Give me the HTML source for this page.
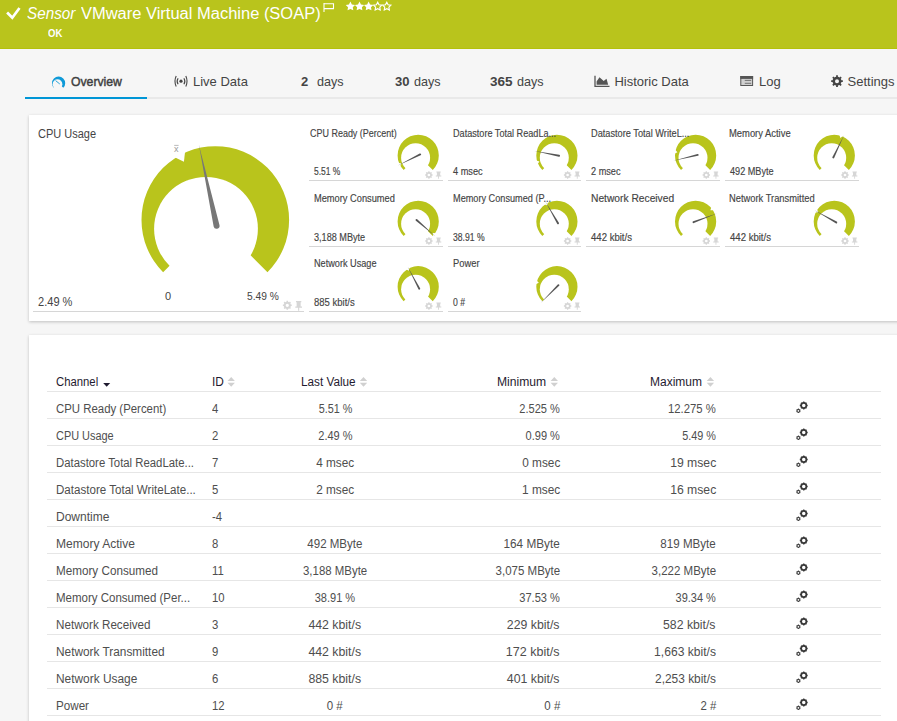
<!DOCTYPE html><html><head><meta charset="utf-8"><style>
html,body{margin:0;padding:0;}
body{width:897px;height:721px;overflow:hidden;position:relative;background:#f6f6f6;font-family:"Liberation Sans",sans-serif;}
.t{position:absolute;white-space:nowrap;}
.abs{position:absolute;}
.s{position:absolute;left:0;top:0;overflow:visible;}
</style></head><body>
<div class="abs" style="left:0;top:0;width:897px;height:48px;background:#b9c41c;border-bottom:1px solid #b4c10a;"></div>
<div class="t" style="left:27.20px;top:5.96px;font-size:16px;line-height:16px;color:#fff;font-weight:normal;font-style:italic;letter-spacing:0px;"><span style="display:inline-block;transform:scaleX(0.953);transform-origin:left 0">Sensor</span></div>
<div class="t" style="left:81.20px;top:5.96px;font-size:16px;line-height:16px;color:#fff;font-weight:normal;font-style:normal;letter-spacing:0px;"><span style="display:inline-block;transform:scaleX(1.03);transform-origin:left 0">VMware Virtual Machine (SOAP)</span></div>
<div class="t" style="left:47.90px;top:27.83px;font-size:10.6px;line-height:10.6px;color:#fff;font-weight:bold;font-style:normal;letter-spacing:0px;"><span style="display:inline-block;transform:scaleX(0.9);transform-origin:left 0">OK</span></div>
<svg class="s" width="897" height="721"><path d="M7.1 12.5 L12.3 17.7 L19.5 8.0" stroke="#fff" stroke-width="2.7" fill="none"/><path d="M324 3 V12 M324 3.8 H333.5 V8.6 H324" stroke="#fff" stroke-width="1.1" fill="none"/><polygon points="350.40,1.50 351.87,4.38 355.06,4.89 352.78,7.17 353.28,10.36 350.40,8.90 347.52,10.36 348.02,7.17 345.74,4.89 348.93,4.38" fill="#fff"/><polygon points="359.50,1.50 360.97,4.38 364.16,4.89 361.88,7.17 362.38,10.36 359.50,8.90 356.62,10.36 357.12,7.17 354.84,4.89 358.03,4.38" fill="#fff"/><polygon points="368.60,1.50 370.07,4.38 373.26,4.89 370.98,7.17 371.48,10.36 368.60,8.90 365.72,10.36 366.22,7.17 363.94,4.89 367.13,4.38" fill="#fff"/><polygon points="377.70,2.20 378.99,4.72 381.79,5.17 379.79,7.18 380.23,9.98 377.70,8.70 375.17,9.98 375.61,7.18 373.61,5.17 376.41,4.72" fill="none" stroke="#fff" stroke-width="1.15"/><polygon points="386.80,2.20 388.09,4.72 390.89,5.17 388.89,7.18 389.33,9.98 386.80,8.70 384.27,9.98 384.71,7.18 382.71,5.17 385.51,4.72" fill="none" stroke="#fff" stroke-width="1.15"/></svg>
<div class="abs" style="left:147px;top:97px;width:750px;height:2px;background:#e9e9e9;"></div>
<div class="abs" style="left:25px;top:97px;width:122px;height:2px;background:#0096d6;"></div>
<svg class="s" width="897" height="721"><path fill-rule="evenodd" d="M58.60,83.20 L53.93,87.87 A6.6,6.6 0 1 1 63.27,87.87 Z" fill="#0f9ad8"/><circle cx="57.50" cy="84.20" r="4.88" fill="#f6f6f6"/><path d="M55.6 80.6 L59.8 84.0" stroke="#0f9ad8" stroke-width="0.9"/><circle cx="181" cy="81.2" r="1.6" fill="#444"/><path d="M178.1 78.2 Q176.1 81.2 178.1 84.2 M183.9 78.2 Q185.9 81.2 183.9 84.2" stroke="#444" stroke-width="1.1" fill="none"/><path d="M176.2 76 Q173.7 81.2 176.2 86.4 M185.8 76 Q188.3 81.2 185.8 86.4" stroke="#444" stroke-width="1.1" fill="none"/><path d="M595 75.8 V86.3 H609.5" stroke="#555" stroke-width="1.3" fill="none"/><path d="M596.6 84.8 L596.6 81.5 L599.5 77.2 L603.7 81 L606.5 78.8 L608.2 84.8 Z" fill="#555"/><rect x="740.8" y="76.5" width="11.8" height="9" fill="#d0d0d0" stroke="#555" stroke-width="1"/><rect x="740.3" y="76" width="12.8" height="2.9" fill="#555"/><path d="M744.8 80.4 H751.2 M744.8 83.3 H751.2" stroke="#666" stroke-width="0.9"/><path fill-rule="evenodd" d="M835.28,77.06 L836.13,76.80 L836.08,75.37 L837.92,75.37 L837.87,76.80 L838.72,77.06 L838.72,77.06 L839.49,77.47 L840.47,76.43 L841.77,77.73 L840.73,78.71 L841.14,79.48 L841.14,79.48 L841.40,80.33 L842.83,80.28 L842.83,82.12 L841.40,82.07 L841.14,82.92 L841.14,82.92 L840.73,83.69 L841.77,84.67 L840.47,85.97 L839.49,84.93 L838.72,85.34 L838.72,85.34 L837.87,85.60 L837.92,87.03 L836.08,87.03 L836.13,85.60 L835.28,85.34 L835.28,85.34 L834.51,84.93 L833.53,85.97 L832.23,84.67 L833.27,83.69 L832.86,82.92 L832.86,82.92 L832.60,82.07 L831.17,82.12 L831.17,80.28 L832.60,80.33 L832.86,79.48 L832.86,79.48 L833.27,78.71 L832.23,77.73 L833.53,76.43 L834.51,77.47 L835.28,77.06 Z M839.00,81.20 A2.0,2.0 0 1 0 835.00,81.20 A2.0,2.0 0 1 0 839.00,81.20 Z" fill="#444"/></svg>
<div class="t" style="left:70.80px;top:74.80px;font-size:13px;line-height:13px;color:#404040;font-weight:normal;font-style:normal;letter-spacing:0px;-webkit-text-stroke:0.45px #404040;"><span style="display:inline-block;transform:scaleX(0.94);transform-origin:left 0">Overview</span></div>
<div class="t" style="left:193.00px;top:74.80px;font-size:13px;line-height:13px;color:#444;font-weight:normal;font-style:normal;letter-spacing:0px;">Live Data</div>
<div class="t" style="left:301.00px;top:74.80px;font-size:13px;line-height:13px;color:#444;font-weight:bold;font-style:normal;letter-spacing:0px;">2</div>
<div class="t" style="left:316.70px;top:74.80px;font-size:13px;line-height:13px;color:#444;font-weight:normal;font-style:normal;letter-spacing:0px;"><span style="display:inline-block;transform:scaleX(0.97);transform-origin:left 0">days</span></div>
<div class="t" style="left:395.00px;top:74.80px;font-size:13px;line-height:13px;color:#444;font-weight:bold;font-style:normal;letter-spacing:0px;">30</div>
<div class="t" style="left:414.40px;top:74.80px;font-size:13px;line-height:13px;color:#444;font-weight:normal;font-style:normal;letter-spacing:0px;"><span style="display:inline-block;transform:scaleX(0.97);transform-origin:left 0">days</span></div>
<div class="t" style="left:489.90px;top:74.80px;font-size:13px;line-height:13px;color:#444;font-weight:bold;font-style:normal;letter-spacing:0px;"><span style="display:inline-block;transform:scaleX(1.04);transform-origin:left 0">365</span></div>
<div class="t" style="left:516.80px;top:74.80px;font-size:13px;line-height:13px;color:#444;font-weight:normal;font-style:normal;letter-spacing:0px;"><span style="display:inline-block;transform:scaleX(0.97);transform-origin:left 0">days</span></div>
<div class="t" style="left:614.40px;top:74.80px;font-size:13px;line-height:13px;color:#444;font-weight:normal;font-style:normal;letter-spacing:0px;">Historic Data</div>
<div class="t" style="left:759.00px;top:74.80px;font-size:13px;line-height:13px;color:#444;font-weight:normal;font-style:normal;letter-spacing:0px;">Log</div>
<div class="t" style="left:847.60px;top:74.80px;font-size:13px;line-height:13px;color:#444;font-weight:normal;font-style:normal;letter-spacing:0px;">Settings</div>
<div class="abs" style="left:29px;top:115px;width:880px;height:206px;background:#fff;box-shadow:0 1px 3px rgba(0,0,0,0.22);"></div>
<svg class="s" width="897" height="721"><path d="M215.30,220.00 L163.12,272.18 A73.8,73.8 0 1 1 267.48,272.18 Z" fill="#b9c41c"/><circle cx="206.00" cy="228.80" r="51.90" fill="#fff"/><polygon points="171.10,155.45 183.92,161.71 185.56,147.49" fill="#fff"/><path d="M198.87,144.65 L219.51,225.22 A3.0,3.0 0 0 1 213.65,226.50 Z" fill="#777"/><path fill-rule="evenodd" d="M285.92,301.97 L286.53,301.78 L286.53,300.87 L288.07,300.87 L288.07,301.78 L288.68,301.97 L288.68,301.97 L289.24,302.27 L289.89,301.62 L290.98,302.71 L290.33,303.36 L290.63,303.92 L290.63,303.92 L290.82,304.53 L291.73,304.53 L291.73,306.07 L290.82,306.07 L290.63,306.68 L290.63,306.68 L290.33,307.24 L290.98,307.89 L289.89,308.98 L289.24,308.33 L288.68,308.63 L288.68,308.63 L288.07,308.82 L288.07,309.73 L286.53,309.73 L286.53,308.82 L285.92,308.63 L285.92,308.63 L285.36,308.33 L284.71,308.98 L283.62,307.89 L284.27,307.24 L283.97,306.68 L283.97,306.68 L283.78,306.07 L282.87,306.07 L282.87,304.53 L283.78,304.53 L283.97,303.92 L283.97,303.92 L284.27,303.36 L283.62,302.71 L284.71,301.62 L285.36,302.27 L285.92,301.97 Z M288.92,305.30 A1.6199999999999999,1.6199999999999999 0 1 0 285.68,305.30 A1.6199999999999999,1.6199999999999999 0 1 0 288.92,305.30 Z" fill="#d6d6d6"/><path d="M295.97,301.00 H301.33 V302.37 H300.66 V306.49 H302.00 V307.86 H299.19 V310.80 H298.11 V307.86 H295.30 V306.49 H296.64 V302.37 H295.97 Z" fill="#d6d6d6"/><path d="M174.2 145.4 H178.6" stroke="#aaa" stroke-width="0.8"/></svg>
<div class="t" style="left:174.00px;top:144.68px;font-size:9px;line-height:9px;color:#999;font-weight:normal;font-style:normal;letter-spacing:0px;">x</div>
<div class="t" style="left:37.90px;top:127.72px;font-size:12.5px;line-height:12.5px;color:#444;font-weight:normal;font-style:normal;letter-spacing:0px;"><span style="display:inline-block;transform:scaleX(0.88);transform-origin:left 0">CPU Usage</span></div>
<div class="t" style="left:37.60px;top:296.22px;font-size:12.5px;line-height:12.5px;color:#444;font-weight:normal;font-style:normal;letter-spacing:0px;"><span style="display:inline-block;transform:scaleX(0.885);transform-origin:left 0">2.49 %</span></div>
<div class="t" style="left:165.00px;top:290.69px;font-size:11px;line-height:11px;color:#444;font-weight:normal;font-style:normal;letter-spacing:0px;">0</div>
<div class="t" style="left:246.50px;top:290.69px;font-size:11px;line-height:11px;color:#444;font-weight:normal;font-style:normal;letter-spacing:0px;"><span style="display:inline-block;transform:scaleX(0.93);transform-origin:left 0">5.49 %</span></div>
<div class="abs" style="left:33px;top:311px;width:271px;height:1px;background:#d6d6d6;"></div>
<div class="abs" style="left:309.0px;top:180px;width:133.5px;height:1px;background:#d6d6d6;"></div>
<div class="abs" style="left:447.7px;top:180px;width:133.5px;height:1px;background:#d6d6d6;"></div>
<div class="abs" style="left:586.4px;top:180px;width:133.5px;height:1px;background:#d6d6d6;"></div>
<div class="abs" style="left:725.1px;top:180px;width:133.5px;height:1px;background:#d6d6d6;"></div>
<div class="abs" style="left:309.0px;top:246px;width:133.5px;height:1px;background:#d6d6d6;"></div>
<div class="abs" style="left:447.7px;top:246px;width:133.5px;height:1px;background:#d6d6d6;"></div>
<div class="abs" style="left:586.4px;top:246px;width:133.5px;height:1px;background:#d6d6d6;"></div>
<div class="abs" style="left:725.1px;top:246px;width:133.5px;height:1px;background:#d6d6d6;"></div>
<div class="abs" style="left:309.0px;top:311px;width:133.5px;height:1px;background:#d6d6d6;"></div>
<div class="abs" style="left:447.7px;top:311px;width:133.5px;height:1px;background:#d6d6d6;"></div>
<svg class="s" width="897" height="721"><path d="M418.20,155.40 L403.63,169.97 A20.6,20.6 0 1 1 432.77,169.97 Z" fill="#b9c41c"/><circle cx="415.60" cy="157.86" r="14.49" fill="#fff"/><polygon points="399.68,166.97 401.58,163.47 397.63,162.85" fill="#fff"/><path d="M397.89,165.44 L419.73,153.53 A1.0,1.0 0 0 1 420.62,155.32 Z" fill="#555"/><path fill-rule="evenodd" d="M427.75,172.23 L428.26,172.07 L428.26,171.31 L429.54,171.31 L429.54,172.07 L430.05,172.23 L430.05,172.23 L430.52,172.47 L431.06,171.93 L431.97,172.84 L431.43,173.38 L431.67,173.85 L431.67,173.85 L431.83,174.36 L432.59,174.36 L432.59,175.64 L431.83,175.64 L431.67,176.15 L431.67,176.15 L431.43,176.62 L431.97,177.16 L431.06,178.07 L430.52,177.53 L430.05,177.77 L430.05,177.77 L429.54,177.93 L429.54,178.69 L428.26,178.69 L428.26,177.93 L427.75,177.77 L427.75,177.77 L427.28,177.53 L426.74,178.07 L425.83,177.16 L426.37,176.62 L426.13,176.15 L426.13,176.15 L425.97,175.64 L425.21,175.64 L425.21,174.36 L425.97,174.36 L426.13,173.85 L426.13,173.85 L426.37,173.38 L425.83,172.84 L426.74,171.93 L427.28,172.47 L427.75,172.23 Z M430.25,175.00 A1.3499999999999999,1.3499999999999999 0 1 0 427.55,175.00 A1.3499999999999999,1.3499999999999999 0 1 0 430.25,175.00 Z" fill="#d6d6d6"/><path d="M436.35,171.60 H440.75 V172.59 H440.20 V175.58 H441.30 V176.57 H438.99 V178.70 H438.11 V176.57 H435.80 V175.58 H436.90 V172.59 H436.35 Z" fill="#d6d6d6"/><path d="M556.90,155.40 L542.33,169.97 A20.6,20.6 0 1 1 571.47,169.97 Z" fill="#b9c41c"/><circle cx="554.30" cy="157.86" r="14.49" fill="#fff"/><polygon points="537.11,164.63 539.42,161.39 535.57,160.28" fill="#fff"/><path d="M534.69,150.88 L559.26,154.86 A1.0,1.0 0 0 1 558.86,156.82 Z" fill="#555"/><path fill-rule="evenodd" d="M566.45,172.23 L566.96,172.07 L566.96,171.31 L568.24,171.31 L568.24,172.07 L568.75,172.23 L568.75,172.23 L569.22,172.47 L569.76,171.93 L570.67,172.84 L570.13,173.38 L570.37,173.85 L570.37,173.85 L570.53,174.36 L571.29,174.36 L571.29,175.64 L570.53,175.64 L570.37,176.15 L570.37,176.15 L570.13,176.62 L570.67,177.16 L569.76,178.07 L569.22,177.53 L568.75,177.77 L568.75,177.77 L568.24,177.93 L568.24,178.69 L566.96,178.69 L566.96,177.93 L566.45,177.77 L566.45,177.77 L565.98,177.53 L565.44,178.07 L564.53,177.16 L565.07,176.62 L564.83,176.15 L564.83,176.15 L564.67,175.64 L563.91,175.64 L563.91,174.36 L564.67,174.36 L564.83,173.85 L564.83,173.85 L565.07,173.38 L564.53,172.84 L565.44,171.93 L565.98,172.47 L566.45,172.23 Z M568.95,175.00 A1.3499999999999999,1.3499999999999999 0 1 0 566.25,175.00 A1.3499999999999999,1.3499999999999999 0 1 0 568.95,175.00 Z" fill="#d6d6d6"/><path d="M575.05,171.60 H579.45 V172.59 H578.90 V175.58 H580.00 V176.57 H577.69 V178.70 H576.81 V176.57 H574.50 V175.58 H575.60 V172.59 H575.05 Z" fill="#d6d6d6"/><path d="M695.60,155.40 L681.03,169.97 A20.6,20.6 0 1 1 710.17,169.97 Z" fill="#b9c41c"/><circle cx="693.00" cy="157.86" r="14.49" fill="#fff"/><polygon points="673.82,153.88 677.41,152.16 674.58,149.33" fill="#fff"/><path d="M673.58,160.73 L697.50,153.91 A1.0,1.0 0 0 1 697.97,155.85 Z" fill="#555"/><path fill-rule="evenodd" d="M705.15,172.23 L705.66,172.07 L705.66,171.31 L706.94,171.31 L706.94,172.07 L707.45,172.23 L707.45,172.23 L707.92,172.47 L708.46,171.93 L709.37,172.84 L708.83,173.38 L709.07,173.85 L709.07,173.85 L709.23,174.36 L709.99,174.36 L709.99,175.64 L709.23,175.64 L709.07,176.15 L709.07,176.15 L708.83,176.62 L709.37,177.16 L708.46,178.07 L707.92,177.53 L707.45,177.77 L707.45,177.77 L706.94,177.93 L706.94,178.69 L705.66,178.69 L705.66,177.93 L705.15,177.77 L705.15,177.77 L704.68,177.53 L704.14,178.07 L703.23,177.16 L703.77,176.62 L703.53,176.15 L703.53,176.15 L703.37,175.64 L702.61,175.64 L702.61,174.36 L703.37,174.36 L703.53,173.85 L703.53,173.85 L703.77,173.38 L703.23,172.84 L704.14,171.93 L704.68,172.47 L705.15,172.23 Z M707.65,175.00 A1.3499999999999999,1.3499999999999999 0 1 0 704.95,175.00 A1.3499999999999999,1.3499999999999999 0 1 0 707.65,175.00 Z" fill="#d6d6d6"/><path d="M713.75,171.60 H718.15 V172.59 H717.60 V175.58 H718.70 V176.57 H716.39 V178.70 H715.51 V176.57 H713.20 V175.58 H714.30 V172.59 H713.75 Z" fill="#d6d6d6"/><path d="M834.30,155.40 L819.73,169.97 A20.6,20.6 0 1 1 848.87,169.97 Z" fill="#b9c41c"/><circle cx="831.70" cy="157.86" r="14.49" fill="#fff"/><polygon points="839.21,134.12 840.35,137.94 843.58,135.59" fill="#fff"/><path d="M844.13,134.98 L834.25,157.82 A1.0,1.0 0 0 1 832.44,156.95 Z" fill="#555"/><path fill-rule="evenodd" d="M843.85,172.23 L844.36,172.07 L844.36,171.31 L845.64,171.31 L845.64,172.07 L846.15,172.23 L846.15,172.23 L846.62,172.47 L847.16,171.93 L848.07,172.84 L847.53,173.38 L847.77,173.85 L847.77,173.85 L847.93,174.36 L848.69,174.36 L848.69,175.64 L847.93,175.64 L847.77,176.15 L847.77,176.15 L847.53,176.62 L848.07,177.16 L847.16,178.07 L846.62,177.53 L846.15,177.77 L846.15,177.77 L845.64,177.93 L845.64,178.69 L844.36,178.69 L844.36,177.93 L843.85,177.77 L843.85,177.77 L843.38,177.53 L842.84,178.07 L841.93,177.16 L842.47,176.62 L842.23,176.15 L842.23,176.15 L842.07,175.64 L841.31,175.64 L841.31,174.36 L842.07,174.36 L842.23,173.85 L842.23,173.85 L842.47,173.38 L841.93,172.84 L842.84,171.93 L843.38,172.47 L843.85,172.23 Z M846.35,175.00 A1.3499999999999999,1.3499999999999999 0 1 0 843.65,175.00 A1.3499999999999999,1.3499999999999999 0 1 0 846.35,175.00 Z" fill="#d6d6d6"/><path d="M852.45,171.60 H856.85 V172.59 H856.30 V175.58 H857.40 V176.57 H855.09 V178.70 H854.21 V176.57 H851.90 V175.58 H853.00 V172.59 H852.45 Z" fill="#d6d6d6"/><path d="M418.20,221.40 L403.63,235.97 A20.6,20.6 0 1 1 432.77,235.97 Z" fill="#b9c41c"/><circle cx="415.60" cy="223.86" r="14.49" fill="#fff"/><polygon points="436.51,233.29 432.54,233.05 433.64,236.90" fill="#fff"/><path d="M435.22,236.36 L415.89,220.70 A1.0,1.0 0 0 1 417.21,219.20 Z" fill="#555"/><path fill-rule="evenodd" d="M427.75,238.23 L428.26,238.07 L428.26,237.31 L429.54,237.31 L429.54,238.07 L430.05,238.23 L430.05,238.23 L430.52,238.47 L431.06,237.93 L431.97,238.84 L431.43,239.38 L431.67,239.85 L431.67,239.85 L431.83,240.36 L432.59,240.36 L432.59,241.64 L431.83,241.64 L431.67,242.15 L431.67,242.15 L431.43,242.62 L431.97,243.16 L431.06,244.07 L430.52,243.53 L430.05,243.77 L430.05,243.77 L429.54,243.93 L429.54,244.69 L428.26,244.69 L428.26,243.93 L427.75,243.77 L427.75,243.77 L427.28,243.53 L426.74,244.07 L425.83,243.16 L426.37,242.62 L426.13,242.15 L426.13,242.15 L425.97,241.64 L425.21,241.64 L425.21,240.36 L425.97,240.36 L426.13,239.85 L426.13,239.85 L426.37,239.38 L425.83,238.84 L426.74,237.93 L427.28,238.47 L427.75,238.23 Z M430.25,241.00 A1.3499999999999999,1.3499999999999999 0 1 0 427.55,241.00 A1.3499999999999999,1.3499999999999999 0 1 0 430.25,241.00 Z" fill="#d6d6d6"/><path d="M436.35,237.60 H440.75 V238.59 H440.20 V241.58 H441.30 V242.57 H438.99 V244.70 H438.11 V242.57 H435.80 V241.58 H436.90 V238.59 H436.35 Z" fill="#d6d6d6"/><path d="M556.90,221.40 L542.33,235.97 A20.6,20.6 0 1 1 571.47,235.97 Z" fill="#b9c41c"/><circle cx="554.30" cy="223.86" r="14.49" fill="#fff"/><polygon points="543.76,203.96 547.41,205.54 547.69,201.56" fill="#fff"/><path d="M545.50,201.82 L558.87,222.80 A1.0,1.0 0 0 1 557.14,223.80 Z" fill="#555"/><path fill-rule="evenodd" d="M566.45,238.23 L566.96,238.07 L566.96,237.31 L568.24,237.31 L568.24,238.07 L568.75,238.23 L568.75,238.23 L569.22,238.47 L569.76,237.93 L570.67,238.84 L570.13,239.38 L570.37,239.85 L570.37,239.85 L570.53,240.36 L571.29,240.36 L571.29,241.64 L570.53,241.64 L570.37,242.15 L570.37,242.15 L570.13,242.62 L570.67,243.16 L569.76,244.07 L569.22,243.53 L568.75,243.77 L568.75,243.77 L568.24,243.93 L568.24,244.69 L566.96,244.69 L566.96,243.93 L566.45,243.77 L566.45,243.77 L565.98,243.53 L565.44,244.07 L564.53,243.16 L565.07,242.62 L564.83,242.15 L564.83,242.15 L564.67,241.64 L563.91,241.64 L563.91,240.36 L564.67,240.36 L564.83,239.85 L564.83,239.85 L565.07,239.38 L564.53,238.84 L565.44,237.93 L565.98,238.47 L566.45,238.23 Z M568.95,241.00 A1.3499999999999999,1.3499999999999999 0 1 0 566.25,241.00 A1.3499999999999999,1.3499999999999999 0 1 0 568.95,241.00 Z" fill="#d6d6d6"/><path d="M575.05,237.60 H579.45 V238.59 H578.90 V241.58 H580.00 V242.57 H577.69 V244.70 H576.81 V242.57 H574.50 V241.58 H575.60 V238.59 H575.05 Z" fill="#d6d6d6"/><path d="M695.60,221.40 L681.03,235.97 A20.6,20.6 0 1 1 710.17,235.97 Z" fill="#b9c41c"/><circle cx="693.00" cy="223.86" r="14.49" fill="#fff"/><polygon points="711.57,206.51 710.38,210.31 714.37,210.17" fill="#fff"/><path d="M716.88,213.61 L693.88,223.10 A1.0,1.0 0 0 1 693.19,221.22 Z" fill="#555"/><path fill-rule="evenodd" d="M705.15,238.23 L705.66,238.07 L705.66,237.31 L706.94,237.31 L706.94,238.07 L707.45,238.23 L707.45,238.23 L707.92,238.47 L708.46,237.93 L709.37,238.84 L708.83,239.38 L709.07,239.85 L709.07,239.85 L709.23,240.36 L709.99,240.36 L709.99,241.64 L709.23,241.64 L709.07,242.15 L709.07,242.15 L708.83,242.62 L709.37,243.16 L708.46,244.07 L707.92,243.53 L707.45,243.77 L707.45,243.77 L706.94,243.93 L706.94,244.69 L705.66,244.69 L705.66,243.93 L705.15,243.77 L705.15,243.77 L704.68,243.53 L704.14,244.07 L703.23,243.16 L703.77,242.62 L703.53,242.15 L703.53,242.15 L703.37,241.64 L702.61,241.64 L702.61,240.36 L703.37,240.36 L703.53,239.85 L703.53,239.85 L703.77,239.38 L703.23,238.84 L704.14,237.93 L704.68,238.47 L705.15,238.23 Z M707.65,241.00 A1.3499999999999999,1.3499999999999999 0 1 0 704.95,241.00 A1.3499999999999999,1.3499999999999999 0 1 0 707.65,241.00 Z" fill="#d6d6d6"/><path d="M713.75,237.60 H718.15 V238.59 H717.60 V241.58 H718.70 V242.57 H716.39 V244.70 H715.51 V242.57 H713.20 V241.58 H714.30 V238.59 H713.75 Z" fill="#d6d6d6"/><path d="M834.30,221.40 L819.73,235.97 A20.6,20.6 0 1 1 848.87,235.97 Z" fill="#b9c41c"/><circle cx="831.70" cy="223.86" r="14.49" fill="#fff"/><polygon points="814.35,212.52 818.31,212.13 816.62,208.51" fill="#fff"/><path d="M814.54,210.31 L836.71,221.60 A1.0,1.0 0 0 1 835.73,223.35 Z" fill="#555"/><path fill-rule="evenodd" d="M843.85,238.23 L844.36,238.07 L844.36,237.31 L845.64,237.31 L845.64,238.07 L846.15,238.23 L846.15,238.23 L846.62,238.47 L847.16,237.93 L848.07,238.84 L847.53,239.38 L847.77,239.85 L847.77,239.85 L847.93,240.36 L848.69,240.36 L848.69,241.64 L847.93,241.64 L847.77,242.15 L847.77,242.15 L847.53,242.62 L848.07,243.16 L847.16,244.07 L846.62,243.53 L846.15,243.77 L846.15,243.77 L845.64,243.93 L845.64,244.69 L844.36,244.69 L844.36,243.93 L843.85,243.77 L843.85,243.77 L843.38,243.53 L842.84,244.07 L841.93,243.16 L842.47,242.62 L842.23,242.15 L842.23,242.15 L842.07,241.64 L841.31,241.64 L841.31,240.36 L842.07,240.36 L842.23,239.85 L842.23,239.85 L842.47,239.38 L841.93,238.84 L842.84,237.93 L843.38,238.47 L843.85,238.23 Z M846.35,241.00 A1.3499999999999999,1.3499999999999999 0 1 0 843.65,241.00 A1.3499999999999999,1.3499999999999999 0 1 0 846.35,241.00 Z" fill="#d6d6d6"/><path d="M852.45,237.60 H856.85 V238.59 H856.30 V241.58 H857.40 V242.57 H855.09 V244.70 H854.21 V242.57 H851.90 V241.58 H853.00 V238.59 H852.45 Z" fill="#d6d6d6"/><path d="M418.20,286.70 L403.63,301.27 A20.6,20.6 0 1 1 432.77,301.27 Z" fill="#b9c41c"/><circle cx="415.60" cy="289.16" r="14.49" fill="#fff"/><polygon points="405.37,269.03 408.99,270.68 409.34,266.70" fill="#fff"/><path d="M407.67,266.64 L420.11,288.18 A1.0,1.0 0 0 1 418.34,289.11 Z" fill="#555"/><path fill-rule="evenodd" d="M427.75,303.23 L428.26,303.07 L428.26,302.31 L429.54,302.31 L429.54,303.07 L430.05,303.23 L430.05,303.23 L430.52,303.47 L431.06,302.93 L431.97,303.84 L431.43,304.38 L431.67,304.85 L431.67,304.85 L431.83,305.36 L432.59,305.36 L432.59,306.64 L431.83,306.64 L431.67,307.15 L431.67,307.15 L431.43,307.62 L431.97,308.16 L431.06,309.07 L430.52,308.53 L430.05,308.77 L430.05,308.77 L429.54,308.93 L429.54,309.69 L428.26,309.69 L428.26,308.93 L427.75,308.77 L427.75,308.77 L427.28,308.53 L426.74,309.07 L425.83,308.16 L426.37,307.62 L426.13,307.15 L426.13,307.15 L425.97,306.64 L425.21,306.64 L425.21,305.36 L425.97,305.36 L426.13,304.85 L426.13,304.85 L426.37,304.38 L425.83,303.84 L426.74,302.93 L427.28,303.47 L427.75,303.23 Z M430.25,306.00 A1.3499999999999999,1.3499999999999999 0 1 0 427.55,306.00 A1.3499999999999999,1.3499999999999999 0 1 0 430.25,306.00 Z" fill="#d6d6d6"/><path d="M436.35,302.60 H440.75 V303.59 H440.20 V306.58 H441.30 V307.57 H438.99 V309.70 H438.11 V307.57 H435.80 V306.58 H436.90 V303.59 H436.35 Z" fill="#d6d6d6"/><path d="M556.90,286.70 L542.33,301.27 A20.6,20.6 0 1 1 571.47,301.27 Z" fill="#b9c41c"/><circle cx="554.30" cy="289.16" r="14.49" fill="#fff"/><polygon points="535.18,284.42 538.83,282.83 536.11,279.90" fill="#fff"/><path d="M540.88,302.72 L557.75,284.44 A1.0,1.0 0 0 1 559.16,285.85 Z" fill="#555"/><path fill-rule="evenodd" d="M566.45,303.23 L566.96,303.07 L566.96,302.31 L568.24,302.31 L568.24,303.07 L568.75,303.23 L568.75,303.23 L569.22,303.47 L569.76,302.93 L570.67,303.84 L570.13,304.38 L570.37,304.85 L570.37,304.85 L570.53,305.36 L571.29,305.36 L571.29,306.64 L570.53,306.64 L570.37,307.15 L570.37,307.15 L570.13,307.62 L570.67,308.16 L569.76,309.07 L569.22,308.53 L568.75,308.77 L568.75,308.77 L568.24,308.93 L568.24,309.69 L566.96,309.69 L566.96,308.93 L566.45,308.77 L566.45,308.77 L565.98,308.53 L565.44,309.07 L564.53,308.16 L565.07,307.62 L564.83,307.15 L564.83,307.15 L564.67,306.64 L563.91,306.64 L563.91,305.36 L564.67,305.36 L564.83,304.85 L564.83,304.85 L565.07,304.38 L564.53,303.84 L565.44,302.93 L565.98,303.47 L566.45,303.23 Z M568.95,306.00 A1.3499999999999999,1.3499999999999999 0 1 0 566.25,306.00 A1.3499999999999999,1.3499999999999999 0 1 0 568.95,306.00 Z" fill="#d6d6d6"/><path d="M575.05,302.60 H579.45 V303.59 H578.90 V306.58 H580.00 V307.57 H577.69 V309.70 H576.81 V307.57 H574.50 V306.58 H575.60 V303.59 H575.05 Z" fill="#d6d6d6"/></svg>
<div class="t" style="left:310.30px;top:128.53px;font-size:10px;line-height:10px;color:#444;font-weight:normal;font-style:normal;letter-spacing:0px;-webkit-text-stroke:0.15px #444;"><span style="display:inline-block;transform:scaleX(0.8969400000000001);transform-origin:left 0">CPU Ready (Percent)</span></div>
<div class="t" style="left:314.10px;top:166.84px;font-size:10px;line-height:10px;color:#444;font-weight:normal;font-style:normal;letter-spacing:0px;-webkit-text-stroke:0.15px #444;"><span style="display:inline-block;transform:scaleX(0.8464499999999999);transform-origin:left 0">5.51 %</span></div>
<div class="t" style="left:452.50px;top:128.53px;font-size:10px;line-height:10px;color:#444;font-weight:normal;font-style:normal;letter-spacing:0px;-webkit-text-stroke:0.15px #444;"><span style="display:inline-block;transform:scaleX(0.9108);transform-origin:left 0">Datastore Total ReadLa...</span></div>
<div class="t" style="left:452.70px;top:166.84px;font-size:10px;line-height:10px;color:#444;font-weight:normal;font-style:normal;letter-spacing:0px;-webkit-text-stroke:0.15px #444;"><span style="display:inline-block;transform:scaleX(0.9187200000000001);transform-origin:left 0">4 msec</span></div>
<div class="t" style="left:591.00px;top:128.53px;font-size:10px;line-height:10px;color:#444;font-weight:normal;font-style:normal;letter-spacing:0px;-webkit-text-stroke:0.15px #444;"><span style="display:inline-block;transform:scaleX(0.9207000000000001);transform-origin:left 0">Datastore Total WriteL...</span></div>
<div class="t" style="left:591.20px;top:166.84px;font-size:10px;line-height:10px;color:#444;font-weight:normal;font-style:normal;letter-spacing:0px;-webkit-text-stroke:0.15px #444;"><span style="display:inline-block;transform:scaleX(0.9157500000000001);transform-origin:left 0">2 msec</span></div>
<div class="t" style="left:729.40px;top:128.53px;font-size:10px;line-height:10px;color:#444;font-weight:normal;font-style:normal;letter-spacing:0px;-webkit-text-stroke:0.15px #444;"><span style="display:inline-block;transform:scaleX(0.93951);transform-origin:left 0">Memory Active</span></div>
<div class="t" style="left:729.60px;top:166.84px;font-size:10px;line-height:10px;color:#444;font-weight:normal;font-style:normal;letter-spacing:0px;-webkit-text-stroke:0.15px #444;"><span style="display:inline-block;transform:scaleX(0.91179);transform-origin:left 0">492 MByte</span></div>
<div class="t" style="left:313.90px;top:194.34px;font-size:10px;line-height:10px;color:#444;font-weight:normal;font-style:normal;letter-spacing:0px;-webkit-text-stroke:0.15px #444;"><span style="display:inline-block;transform:scaleX(0.92664);transform-origin:left 0">Memory Consumed</span></div>
<div class="t" style="left:314.10px;top:232.53px;font-size:10px;line-height:10px;color:#444;font-weight:normal;font-style:normal;letter-spacing:0px;-webkit-text-stroke:0.15px #444;"><span style="display:inline-block;transform:scaleX(0.9108);transform-origin:left 0">3,188 MByte</span></div>
<div class="t" style="left:452.50px;top:194.34px;font-size:10px;line-height:10px;color:#444;font-weight:normal;font-style:normal;letter-spacing:0px;-webkit-text-stroke:0.15px #444;"><span style="display:inline-block;transform:scaleX(0.9157500000000001);transform-origin:left 0">Memory Consumed (P...</span></div>
<div class="t" style="left:452.70px;top:232.53px;font-size:10px;line-height:10px;color:#444;font-weight:normal;font-style:normal;letter-spacing:0px;-webkit-text-stroke:0.15px #444;"><span style="display:inline-block;transform:scaleX(0.8613);transform-origin:left 0">38.91 %</span></div>
<div class="t" style="left:591.00px;top:194.34px;font-size:10px;line-height:10px;color:#444;font-weight:normal;font-style:normal;letter-spacing:0px;-webkit-text-stroke:0.15px #444;"><span style="display:inline-block;transform:scaleX(1.0246499999999998);transform-origin:left 0">Network Received</span></div>
<div class="t" style="left:591.20px;top:232.53px;font-size:10px;line-height:10px;color:#444;font-weight:normal;font-style:normal;letter-spacing:0px;-webkit-text-stroke:0.15px #444;"><span style="display:inline-block;transform:scaleX(0.95733);transform-origin:left 0">442 kbit/s</span></div>
<div class="t" style="left:729.40px;top:194.34px;font-size:10px;line-height:10px;color:#444;font-weight:normal;font-style:normal;letter-spacing:0px;-webkit-text-stroke:0.15px #444;"><span style="display:inline-block;transform:scaleX(0.9335699999999999);transform-origin:left 0">Network Transmitted</span></div>
<div class="t" style="left:729.60px;top:232.53px;font-size:10px;line-height:10px;color:#444;font-weight:normal;font-style:normal;letter-spacing:0px;-webkit-text-stroke:0.15px #444;"><span style="display:inline-block;transform:scaleX(0.95733);transform-origin:left 0">442 kbit/s</span></div>
<div class="t" style="left:313.90px;top:258.94px;font-size:10px;line-height:10px;color:#444;font-weight:normal;font-style:normal;letter-spacing:0px;-webkit-text-stroke:0.15px #444;"><span style="display:inline-block;transform:scaleX(0.91476);transform-origin:left 0">Network Usage</span></div>
<div class="t" style="left:314.10px;top:298.34px;font-size:10px;line-height:10px;color:#444;font-weight:normal;font-style:normal;letter-spacing:0px;-webkit-text-stroke:0.15px #444;"><span style="display:inline-block;transform:scaleX(0.9503999999999999);transform-origin:left 0">885 kbit/s</span></div>
<div class="t" style="left:452.50px;top:258.94px;font-size:10px;line-height:10px;color:#444;font-weight:normal;font-style:normal;letter-spacing:0px;-webkit-text-stroke:0.15px #444;"><span style="display:inline-block;transform:scaleX(0.93456);transform-origin:left 0">Power</span></div>
<div class="t" style="left:452.70px;top:298.34px;font-size:10px;line-height:10px;color:#444;font-weight:normal;font-style:normal;letter-spacing:0px;-webkit-text-stroke:0.15px #444;"><span style="display:inline-block;transform:scaleX(0.86229);transform-origin:left 0">0 #</span></div>
<div class="abs" style="left:29px;top:335px;width:880px;height:400px;background:#fff;box-shadow:0 1px 3px rgba(0,0,0,0.22);"></div>
<div class="t" style="left:56.00px;top:375.92px;font-size:12.5px;line-height:12.5px;color:#1f1b30;font-weight:normal;font-style:normal;letter-spacing:0px;"><span style="display:inline-block;transform:scaleX(0.905);transform-origin:left 0">Channel</span></div>
<div class="t" style="left:212.20px;top:375.92px;font-size:12.5px;line-height:12.5px;color:#1f1b30;font-weight:normal;font-style:normal;letter-spacing:0px;"><span style="display:inline-block;transform:scaleX(0.95);transform-origin:left 0">ID</span></div>
<div class="t" style="left:301.20px;top:375.92px;font-size:12.5px;line-height:12.5px;color:#1f1b30;font-weight:normal;font-style:normal;letter-spacing:0px;"><span style="display:inline-block;transform:scaleX(0.94);transform-origin:left 0">Last Value</span></div>
<div class="t" style="left:496.70px;top:375.92px;font-size:12.5px;line-height:12.5px;color:#1f1b30;font-weight:normal;font-style:normal;letter-spacing:0px;"><span style="display:inline-block;transform:scaleX(0.97);transform-origin:left 0">Minimum</span></div>
<div class="t" style="left:650.00px;top:375.92px;font-size:12.5px;line-height:12.5px;color:#1f1b30;font-weight:normal;font-style:normal;letter-spacing:0px;"><span style="display:inline-block;transform:scaleX(0.96);transform-origin:left 0">Maximum</span></div>
<div class="abs" style="left:47px;top:391px;width:834px;height:1px;background:#e6e6e6;"></div>
<div class="t" style="left:56.00px;top:403.22px;font-size:12.5px;line-height:12.5px;color:#4e4e4e;font-weight:normal;font-style:normal;letter-spacing:0px;"><span style="display:inline-block;transform:scaleX(0.912);transform-origin:left 0">CPU Ready (Percent)</span></div>
<div class="t" style="left:212.20px;top:403.22px;font-size:12.5px;line-height:12.5px;color:#4e4e4e;font-weight:normal;font-style:normal;letter-spacing:0px;"><span style="display:inline-block;transform:scaleX(0.905);transform-origin:left 0">4</span></div>
<div class="t" style="left:135.00px;width:400px;text-align:center;top:403.22px;font-size:12.5px;line-height:12.5px;color:#4e4e4e;font-weight:normal;font-style:normal;letter-spacing:0px;"><span style="display:inline-block;transform:scaleX(0.864);transform-origin:center 0">5.51 %</span></div>
<div class="t" style="right:337.00px;top:403.22px;font-size:12.5px;line-height:12.5px;color:#4e4e4e;font-weight:normal;font-style:normal;letter-spacing:0px;"><span style="display:inline-block;transform:scaleX(0.885);transform-origin:right 0">2.525 %</span></div>
<div class="t" style="right:181.00px;top:403.22px;font-size:12.5px;line-height:12.5px;color:#4e4e4e;font-weight:normal;font-style:normal;letter-spacing:0px;"><span style="display:inline-block;transform:scaleX(0.906);transform-origin:right 0">12.275 %</span></div>
<div class="abs" style="left:47px;top:418px;width:834px;height:1px;background:#e6e6e6;"></div>
<div class="t" style="left:56.00px;top:430.22px;font-size:12.5px;line-height:12.5px;color:#4e4e4e;font-weight:normal;font-style:normal;letter-spacing:0px;"><span style="display:inline-block;transform:scaleX(0.874);transform-origin:left 0">CPU Usage</span></div>
<div class="t" style="left:212.20px;top:430.22px;font-size:12.5px;line-height:12.5px;color:#4e4e4e;font-weight:normal;font-style:normal;letter-spacing:0px;"><span style="display:inline-block;transform:scaleX(0.905);transform-origin:left 0">2</span></div>
<div class="t" style="left:135.00px;width:400px;text-align:center;top:430.22px;font-size:12.5px;line-height:12.5px;color:#4e4e4e;font-weight:normal;font-style:normal;letter-spacing:0px;"><span style="display:inline-block;transform:scaleX(0.882);transform-origin:center 0">2.49 %</span></div>
<div class="t" style="right:337.00px;top:430.22px;font-size:12.5px;line-height:12.5px;color:#4e4e4e;font-weight:normal;font-style:normal;letter-spacing:0px;"><span style="display:inline-block;transform:scaleX(0.882);transform-origin:right 0">0.99 %</span></div>
<div class="t" style="right:181.00px;top:430.22px;font-size:12.5px;line-height:12.5px;color:#4e4e4e;font-weight:normal;font-style:normal;letter-spacing:0px;"><span style="display:inline-block;transform:scaleX(0.867);transform-origin:right 0">5.49 %</span></div>
<div class="abs" style="left:47px;top:445px;width:834px;height:1px;background:#e6e6e6;"></div>
<div class="t" style="left:56.00px;top:457.22px;font-size:12.5px;line-height:12.5px;color:#4e4e4e;font-weight:normal;font-style:normal;letter-spacing:0px;"><span style="display:inline-block;transform:scaleX(0.908);transform-origin:left 0">Datastore Total ReadLate...</span></div>
<div class="t" style="left:212.20px;top:457.22px;font-size:12.5px;line-height:12.5px;color:#4e4e4e;font-weight:normal;font-style:normal;letter-spacing:0px;"><span style="display:inline-block;transform:scaleX(0.905);transform-origin:left 0">7</span></div>
<div class="t" style="left:135.00px;width:400px;text-align:center;top:457.22px;font-size:12.5px;line-height:12.5px;color:#4e4e4e;font-weight:normal;font-style:normal;letter-spacing:0px;"><span style="display:inline-block;transform:scaleX(0.943);transform-origin:center 0">4 msec</span></div>
<div class="t" style="right:337.00px;top:457.22px;font-size:12.5px;line-height:12.5px;color:#4e4e4e;font-weight:normal;font-style:normal;letter-spacing:0px;"><span style="display:inline-block;transform:scaleX(0.945);transform-origin:right 0">0 msec</span></div>
<div class="t" style="right:181.00px;top:457.22px;font-size:12.5px;line-height:12.5px;color:#4e4e4e;font-weight:normal;font-style:normal;letter-spacing:0px;"><span style="display:inline-block;transform:scaleX(0.976);transform-origin:right 0">19 msec</span></div>
<div class="abs" style="left:47px;top:472px;width:834px;height:1px;background:#e6e6e6;"></div>
<div class="t" style="left:56.00px;top:484.22px;font-size:12.5px;line-height:12.5px;color:#4e4e4e;font-weight:normal;font-style:normal;letter-spacing:0px;"><span style="display:inline-block;transform:scaleX(0.926);transform-origin:left 0">Datastore Total WriteLate...</span></div>
<div class="t" style="left:212.20px;top:484.22px;font-size:12.5px;line-height:12.5px;color:#4e4e4e;font-weight:normal;font-style:normal;letter-spacing:0px;"><span style="display:inline-block;transform:scaleX(0.905);transform-origin:left 0">5</span></div>
<div class="t" style="left:135.00px;width:400px;text-align:center;top:484.22px;font-size:12.5px;line-height:12.5px;color:#4e4e4e;font-weight:normal;font-style:normal;letter-spacing:0px;"><span style="display:inline-block;transform:scaleX(0.943);transform-origin:center 0">2 msec</span></div>
<div class="t" style="right:337.00px;top:484.22px;font-size:12.5px;line-height:12.5px;color:#4e4e4e;font-weight:normal;font-style:normal;letter-spacing:0px;"><span style="display:inline-block;transform:scaleX(0.951);transform-origin:right 0">1 msec</span></div>
<div class="t" style="right:181.00px;top:484.22px;font-size:12.5px;line-height:12.5px;color:#4e4e4e;font-weight:normal;font-style:normal;letter-spacing:0px;"><span style="display:inline-block;transform:scaleX(0.976);transform-origin:right 0">16 msec</span></div>
<div class="abs" style="left:47px;top:499px;width:834px;height:1px;background:#e6e6e6;"></div>
<div class="t" style="left:56.00px;top:511.22px;font-size:12.5px;line-height:12.5px;color:#4e4e4e;font-weight:normal;font-style:normal;letter-spacing:0px;"><span style="display:inline-block;transform:scaleX(0.961);transform-origin:left 0">Downtime</span></div>
<div class="t" style="left:212.20px;top:511.22px;font-size:12.5px;line-height:12.5px;color:#4e4e4e;font-weight:normal;font-style:normal;letter-spacing:0px;"><span style="display:inline-block;transform:scaleX(0.905);transform-origin:left 0">-4</span></div>
<div class="t" style="left:135.00px;width:400px;text-align:center;top:511.22px;font-size:12.5px;line-height:12.5px;color:#4e4e4e;font-weight:normal;font-style:normal;letter-spacing:0px;"><span style="display:inline-block;transform:scaleX(0.9);transform-origin:center 0"></span></div>
<div class="t" style="right:337.00px;top:511.22px;font-size:12.5px;line-height:12.5px;color:#4e4e4e;font-weight:normal;font-style:normal;letter-spacing:0px;"><span style="display:inline-block;transform:scaleX(0.9);transform-origin:right 0"></span></div>
<div class="t" style="right:181.00px;top:511.22px;font-size:12.5px;line-height:12.5px;color:#4e4e4e;font-weight:normal;font-style:normal;letter-spacing:0px;"><span style="display:inline-block;transform:scaleX(0.9);transform-origin:right 0"></span></div>
<div class="abs" style="left:47px;top:526px;width:834px;height:1px;background:#e6e6e6;"></div>
<div class="t" style="left:56.00px;top:538.22px;font-size:12.5px;line-height:12.5px;color:#4e4e4e;font-weight:normal;font-style:normal;letter-spacing:0px;"><span style="display:inline-block;transform:scaleX(0.964);transform-origin:left 0">Memory Active</span></div>
<div class="t" style="left:212.20px;top:538.22px;font-size:12.5px;line-height:12.5px;color:#4e4e4e;font-weight:normal;font-style:normal;letter-spacing:0px;"><span style="display:inline-block;transform:scaleX(0.905);transform-origin:left 0">8</span></div>
<div class="t" style="left:135.00px;width:400px;text-align:center;top:538.22px;font-size:12.5px;line-height:12.5px;color:#4e4e4e;font-weight:normal;font-style:normal;letter-spacing:0px;"><span style="display:inline-block;transform:scaleX(0.923);transform-origin:center 0">492 MByte</span></div>
<div class="t" style="right:337.00px;top:538.22px;font-size:12.5px;line-height:12.5px;color:#4e4e4e;font-weight:normal;font-style:normal;letter-spacing:0px;"><span style="display:inline-block;transform:scaleX(0.942);transform-origin:right 0">164 MByte</span></div>
<div class="t" style="right:181.00px;top:538.22px;font-size:12.5px;line-height:12.5px;color:#4e4e4e;font-weight:normal;font-style:normal;letter-spacing:0px;"><span style="display:inline-block;transform:scaleX(0.927);transform-origin:right 0">819 MByte</span></div>
<div class="abs" style="left:47px;top:553px;width:834px;height:1px;background:#e6e6e6;"></div>
<div class="t" style="left:56.00px;top:565.22px;font-size:12.5px;line-height:12.5px;color:#4e4e4e;font-weight:normal;font-style:normal;letter-spacing:0px;"><span style="display:inline-block;transform:scaleX(0.935);transform-origin:left 0">Memory Consumed</span></div>
<div class="t" style="left:212.20px;top:565.22px;font-size:12.5px;line-height:12.5px;color:#4e4e4e;font-weight:normal;font-style:normal;letter-spacing:0px;"><span style="display:inline-block;transform:scaleX(0.905);transform-origin:left 0">11</span></div>
<div class="t" style="left:135.00px;width:400px;text-align:center;top:565.22px;font-size:12.5px;line-height:12.5px;color:#4e4e4e;font-weight:normal;font-style:normal;letter-spacing:0px;"><span style="display:inline-block;transform:scaleX(0.914);transform-origin:center 0">3,188 MByte</span></div>
<div class="t" style="right:337.00px;top:565.22px;font-size:12.5px;line-height:12.5px;color:#4e4e4e;font-weight:normal;font-style:normal;letter-spacing:0px;"><span style="display:inline-block;transform:scaleX(0.92);transform-origin:right 0">3,075 MByte</span></div>
<div class="t" style="right:181.00px;top:565.22px;font-size:12.5px;line-height:12.5px;color:#4e4e4e;font-weight:normal;font-style:normal;letter-spacing:0px;"><span style="display:inline-block;transform:scaleX(0.92);transform-origin:right 0">3,222 MByte</span></div>
<div class="abs" style="left:47px;top:580px;width:834px;height:1px;background:#e6e6e6;"></div>
<div class="t" style="left:56.00px;top:592.22px;font-size:12.5px;line-height:12.5px;color:#4e4e4e;font-weight:normal;font-style:normal;letter-spacing:0px;"><span style="display:inline-block;transform:scaleX(0.92);transform-origin:left 0">Memory Consumed (Per...</span></div>
<div class="t" style="left:212.20px;top:592.22px;font-size:12.5px;line-height:12.5px;color:#4e4e4e;font-weight:normal;font-style:normal;letter-spacing:0px;"><span style="display:inline-block;transform:scaleX(0.905);transform-origin:left 0">10</span></div>
<div class="t" style="left:135.00px;width:400px;text-align:center;top:592.22px;font-size:12.5px;line-height:12.5px;color:#4e4e4e;font-weight:normal;font-style:normal;letter-spacing:0px;"><span style="display:inline-block;transform:scaleX(0.883);transform-origin:center 0">38.91 %</span></div>
<div class="t" style="right:337.00px;top:592.22px;font-size:12.5px;line-height:12.5px;color:#4e4e4e;font-weight:normal;font-style:normal;letter-spacing:0px;"><span style="display:inline-block;transform:scaleX(0.885);transform-origin:right 0">37.53 %</span></div>
<div class="t" style="right:181.00px;top:592.22px;font-size:12.5px;line-height:12.5px;color:#4e4e4e;font-weight:normal;font-style:normal;letter-spacing:0px;"><span style="display:inline-block;transform:scaleX(0.878);transform-origin:right 0">39.34 %</span></div>
<div class="abs" style="left:47px;top:607px;width:834px;height:1px;background:#e6e6e6;"></div>
<div class="t" style="left:56.00px;top:619.22px;font-size:12.5px;line-height:12.5px;color:#4e4e4e;font-weight:normal;font-style:normal;letter-spacing:0px;"><span style="display:inline-block;transform:scaleX(0.932);transform-origin:left 0">Network Received</span></div>
<div class="t" style="left:212.20px;top:619.22px;font-size:12.5px;line-height:12.5px;color:#4e4e4e;font-weight:normal;font-style:normal;letter-spacing:0px;"><span style="display:inline-block;transform:scaleX(0.905);transform-origin:left 0">3</span></div>
<div class="t" style="left:135.00px;width:400px;text-align:center;top:619.22px;font-size:12.5px;line-height:12.5px;color:#4e4e4e;font-weight:normal;font-style:normal;letter-spacing:0px;"><span style="display:inline-block;transform:scaleX(0.985);transform-origin:center 0">442 kbit/s</span></div>
<div class="t" style="right:337.00px;top:619.22px;font-size:12.5px;line-height:12.5px;color:#4e4e4e;font-weight:normal;font-style:normal;letter-spacing:0px;"><span style="display:inline-block;transform:scaleX(0.985);transform-origin:right 0">229 kbit/s</span></div>
<div class="t" style="right:181.00px;top:619.22px;font-size:12.5px;line-height:12.5px;color:#4e4e4e;font-weight:normal;font-style:normal;letter-spacing:0px;"><span style="display:inline-block;transform:scaleX(0.981);transform-origin:right 0">582 kbit/s</span></div>
<div class="abs" style="left:47px;top:634px;width:834px;height:1px;background:#e6e6e6;"></div>
<div class="t" style="left:56.00px;top:646.22px;font-size:12.5px;line-height:12.5px;color:#4e4e4e;font-weight:normal;font-style:normal;letter-spacing:0px;"><span style="display:inline-block;transform:scaleX(0.947);transform-origin:left 0">Network Transmitted</span></div>
<div class="t" style="left:212.20px;top:646.22px;font-size:12.5px;line-height:12.5px;color:#4e4e4e;font-weight:normal;font-style:normal;letter-spacing:0px;"><span style="display:inline-block;transform:scaleX(0.905);transform-origin:left 0">9</span></div>
<div class="t" style="left:135.00px;width:400px;text-align:center;top:646.22px;font-size:12.5px;line-height:12.5px;color:#4e4e4e;font-weight:normal;font-style:normal;letter-spacing:0px;"><span style="display:inline-block;transform:scaleX(0.985);transform-origin:center 0">442 kbit/s</span></div>
<div class="t" style="right:337.00px;top:646.22px;font-size:12.5px;line-height:12.5px;color:#4e4e4e;font-weight:normal;font-style:normal;letter-spacing:0px;"><span style="display:inline-block;transform:scaleX(1.004);transform-origin:right 0">172 kbit/s</span></div>
<div class="t" style="right:181.00px;top:646.22px;font-size:12.5px;line-height:12.5px;color:#4e4e4e;font-weight:normal;font-style:normal;letter-spacing:0px;"><span style="display:inline-block;transform:scaleX(0.967);transform-origin:right 0">1,663 kbit/s</span></div>
<div class="abs" style="left:47px;top:661px;width:834px;height:1px;background:#e6e6e6;"></div>
<div class="t" style="left:56.00px;top:673.22px;font-size:12.5px;line-height:12.5px;color:#4e4e4e;font-weight:normal;font-style:normal;letter-spacing:0px;"><span style="display:inline-block;transform:scaleX(0.951);transform-origin:left 0">Network Usage</span></div>
<div class="t" style="left:212.20px;top:673.22px;font-size:12.5px;line-height:12.5px;color:#4e4e4e;font-weight:normal;font-style:normal;letter-spacing:0px;"><span style="display:inline-block;transform:scaleX(0.905);transform-origin:left 0">6</span></div>
<div class="t" style="left:135.00px;width:400px;text-align:center;top:673.22px;font-size:12.5px;line-height:12.5px;color:#4e4e4e;font-weight:normal;font-style:normal;letter-spacing:0px;"><span style="display:inline-block;transform:scaleX(0.985);transform-origin:center 0">885 kbit/s</span></div>
<div class="t" style="right:337.00px;top:673.22px;font-size:12.5px;line-height:12.5px;color:#4e4e4e;font-weight:normal;font-style:normal;letter-spacing:0px;"><span style="display:inline-block;transform:scaleX(0.985);transform-origin:right 0">401 kbit/s</span></div>
<div class="t" style="right:181.00px;top:673.22px;font-size:12.5px;line-height:12.5px;color:#4e4e4e;font-weight:normal;font-style:normal;letter-spacing:0px;"><span style="display:inline-block;transform:scaleX(0.952);transform-origin:right 0">2,253 kbit/s</span></div>
<div class="abs" style="left:47px;top:688px;width:834px;height:1px;background:#e6e6e6;"></div>
<div class="t" style="left:56.00px;top:700.22px;font-size:12.5px;line-height:12.5px;color:#4e4e4e;font-weight:normal;font-style:normal;letter-spacing:0px;"><span style="display:inline-block;transform:scaleX(0.931);transform-origin:left 0">Power</span></div>
<div class="t" style="left:212.20px;top:700.22px;font-size:12.5px;line-height:12.5px;color:#4e4e4e;font-weight:normal;font-style:normal;letter-spacing:0px;"><span style="display:inline-block;transform:scaleX(0.905);transform-origin:left 0">12</span></div>
<div class="t" style="left:135.00px;width:400px;text-align:center;top:700.22px;font-size:12.5px;line-height:12.5px;color:#4e4e4e;font-weight:normal;font-style:normal;letter-spacing:0px;"><span style="display:inline-block;transform:scaleX(0.922);transform-origin:center 0">0 #</span></div>
<div class="t" style="right:337.00px;top:700.22px;font-size:12.5px;line-height:12.5px;color:#4e4e4e;font-weight:normal;font-style:normal;letter-spacing:0px;"><span style="display:inline-block;transform:scaleX(0.922);transform-origin:right 0">0 #</span></div>
<div class="t" style="right:181.00px;top:700.22px;font-size:12.5px;line-height:12.5px;color:#4e4e4e;font-weight:normal;font-style:normal;letter-spacing:0px;"><span style="display:inline-block;transform:scaleX(0.911);transform-origin:right 0">2 #</span></div>
<div class="abs" style="left:47px;top:715px;width:834px;height:1px;background:#e6e6e6;"></div>
<svg class="s" width="897" height="721"><path d="M103.2 383.0 L110.2 383.0 L106.7 386.8 Z" fill="#1f1b30"/><path d="M227.50 381.10 L231.20 377.10 L234.90 381.10 Z M227.50 382.80 L231.20 386.80 L234.90 382.80 Z" fill="#d0d0d0"/><path d="M359.80 381.10 L363.50 377.10 L367.20 381.10 Z M359.80 382.80 L363.50 386.80 L367.20 382.80 Z" fill="#d0d0d0"/><path d="M550.60 381.10 L554.30 377.10 L558.00 381.10 Z M550.60 382.80 L554.30 386.80 L558.00 382.80 Z" fill="#d0d0d0"/><path d="M706.70 381.10 L710.40 377.10 L714.10 381.10 Z M706.70 382.80 L710.40 386.80 L714.10 382.80 Z" fill="#d0d0d0"/><path fill-rule="evenodd" d="M802.40,402.25 L803.06,402.05 L803.12,401.55 L804.38,401.55 L804.44,402.05 L805.10,402.25 L805.10,402.25 L805.71,402.57 L806.10,402.26 L806.99,403.15 L806.68,403.54 L807.00,404.15 L807.00,404.15 L807.20,404.81 L807.70,404.87 L807.70,406.13 L807.20,406.19 L807.00,406.85 L807.00,406.85 L806.68,407.46 L806.99,407.85 L806.10,408.74 L805.71,408.43 L805.10,408.75 L805.10,408.75 L804.44,408.95 L804.38,409.45 L803.12,409.45 L803.06,408.95 L802.40,408.75 L802.40,408.75 L801.79,408.43 L801.40,408.74 L800.51,407.85 L800.82,407.46 L800.50,406.85 L800.50,406.85 L800.30,406.19 L799.80,406.13 L799.80,404.87 L800.30,404.81 L800.50,404.15 L800.50,404.15 L800.82,403.54 L800.51,403.15 L801.40,402.26 L801.79,402.57 L802.40,402.25 Z M805.50,405.50 A1.75,1.75 0 1 0 802.00,405.50 A1.75,1.75 0 1 0 805.50,405.50 Z" fill="#383838"/><path fill-rule="evenodd" d="M797.42,409.11 L797.89,408.91 L797.92,408.55 L798.88,408.55 L798.91,408.91 L799.38,409.11 L799.38,409.11 L799.78,409.42 L800.11,409.26 L800.59,410.09 L800.29,410.29 L800.36,410.80 L800.36,410.80 L800.29,411.31 L800.59,411.51 L800.11,412.34 L799.78,412.18 L799.38,412.49 L799.38,412.49 L798.91,412.69 L798.88,413.05 L797.92,413.05 L797.89,412.69 L797.42,412.49 L797.42,412.49 L797.02,412.18 L796.69,412.34 L796.21,411.51 L796.51,411.31 L796.44,410.80 L796.44,410.80 L796.51,410.29 L796.21,410.09 L796.69,409.26 L797.02,409.42 L797.42,409.11 Z M799.25,410.80 A0.85,0.85 0 1 0 797.55,410.80 A0.85,0.85 0 1 0 799.25,410.80 Z" fill="#404040"/><path fill-rule="evenodd" d="M802.40,429.25 L803.06,429.05 L803.12,428.55 L804.38,428.55 L804.44,429.05 L805.10,429.25 L805.10,429.25 L805.71,429.57 L806.10,429.26 L806.99,430.15 L806.68,430.54 L807.00,431.15 L807.00,431.15 L807.20,431.81 L807.70,431.87 L807.70,433.13 L807.20,433.19 L807.00,433.85 L807.00,433.85 L806.68,434.46 L806.99,434.85 L806.10,435.74 L805.71,435.43 L805.10,435.75 L805.10,435.75 L804.44,435.95 L804.38,436.45 L803.12,436.45 L803.06,435.95 L802.40,435.75 L802.40,435.75 L801.79,435.43 L801.40,435.74 L800.51,434.85 L800.82,434.46 L800.50,433.85 L800.50,433.85 L800.30,433.19 L799.80,433.13 L799.80,431.87 L800.30,431.81 L800.50,431.15 L800.50,431.15 L800.82,430.54 L800.51,430.15 L801.40,429.26 L801.79,429.57 L802.40,429.25 Z M805.50,432.50 A1.75,1.75 0 1 0 802.00,432.50 A1.75,1.75 0 1 0 805.50,432.50 Z" fill="#383838"/><path fill-rule="evenodd" d="M797.42,436.11 L797.89,435.91 L797.92,435.55 L798.88,435.55 L798.91,435.91 L799.38,436.11 L799.38,436.11 L799.78,436.42 L800.11,436.26 L800.59,437.09 L800.29,437.29 L800.36,437.80 L800.36,437.80 L800.29,438.31 L800.59,438.51 L800.11,439.34 L799.78,439.18 L799.38,439.49 L799.38,439.49 L798.91,439.69 L798.88,440.05 L797.92,440.05 L797.89,439.69 L797.42,439.49 L797.42,439.49 L797.02,439.18 L796.69,439.34 L796.21,438.51 L796.51,438.31 L796.44,437.80 L796.44,437.80 L796.51,437.29 L796.21,437.09 L796.69,436.26 L797.02,436.42 L797.42,436.11 Z M799.25,437.80 A0.85,0.85 0 1 0 797.55,437.80 A0.85,0.85 0 1 0 799.25,437.80 Z" fill="#404040"/><path fill-rule="evenodd" d="M802.40,456.25 L803.06,456.05 L803.12,455.55 L804.38,455.55 L804.44,456.05 L805.10,456.25 L805.10,456.25 L805.71,456.57 L806.10,456.26 L806.99,457.15 L806.68,457.54 L807.00,458.15 L807.00,458.15 L807.20,458.81 L807.70,458.87 L807.70,460.13 L807.20,460.19 L807.00,460.85 L807.00,460.85 L806.68,461.46 L806.99,461.85 L806.10,462.74 L805.71,462.43 L805.10,462.75 L805.10,462.75 L804.44,462.95 L804.38,463.45 L803.12,463.45 L803.06,462.95 L802.40,462.75 L802.40,462.75 L801.79,462.43 L801.40,462.74 L800.51,461.85 L800.82,461.46 L800.50,460.85 L800.50,460.85 L800.30,460.19 L799.80,460.13 L799.80,458.87 L800.30,458.81 L800.50,458.15 L800.50,458.15 L800.82,457.54 L800.51,457.15 L801.40,456.26 L801.79,456.57 L802.40,456.25 Z M805.50,459.50 A1.75,1.75 0 1 0 802.00,459.50 A1.75,1.75 0 1 0 805.50,459.50 Z" fill="#383838"/><path fill-rule="evenodd" d="M797.42,463.11 L797.89,462.91 L797.92,462.55 L798.88,462.55 L798.91,462.91 L799.38,463.11 L799.38,463.11 L799.78,463.42 L800.11,463.26 L800.59,464.09 L800.29,464.29 L800.36,464.80 L800.36,464.80 L800.29,465.31 L800.59,465.51 L800.11,466.34 L799.78,466.18 L799.38,466.49 L799.38,466.49 L798.91,466.69 L798.88,467.05 L797.92,467.05 L797.89,466.69 L797.42,466.49 L797.42,466.49 L797.02,466.18 L796.69,466.34 L796.21,465.51 L796.51,465.31 L796.44,464.80 L796.44,464.80 L796.51,464.29 L796.21,464.09 L796.69,463.26 L797.02,463.42 L797.42,463.11 Z M799.25,464.80 A0.85,0.85 0 1 0 797.55,464.80 A0.85,0.85 0 1 0 799.25,464.80 Z" fill="#404040"/><path fill-rule="evenodd" d="M802.40,483.25 L803.06,483.05 L803.12,482.55 L804.38,482.55 L804.44,483.05 L805.10,483.25 L805.10,483.25 L805.71,483.57 L806.10,483.26 L806.99,484.15 L806.68,484.54 L807.00,485.15 L807.00,485.15 L807.20,485.81 L807.70,485.87 L807.70,487.13 L807.20,487.19 L807.00,487.85 L807.00,487.85 L806.68,488.46 L806.99,488.85 L806.10,489.74 L805.71,489.43 L805.10,489.75 L805.10,489.75 L804.44,489.95 L804.38,490.45 L803.12,490.45 L803.06,489.95 L802.40,489.75 L802.40,489.75 L801.79,489.43 L801.40,489.74 L800.51,488.85 L800.82,488.46 L800.50,487.85 L800.50,487.85 L800.30,487.19 L799.80,487.13 L799.80,485.87 L800.30,485.81 L800.50,485.15 L800.50,485.15 L800.82,484.54 L800.51,484.15 L801.40,483.26 L801.79,483.57 L802.40,483.25 Z M805.50,486.50 A1.75,1.75 0 1 0 802.00,486.50 A1.75,1.75 0 1 0 805.50,486.50 Z" fill="#383838"/><path fill-rule="evenodd" d="M797.42,490.11 L797.89,489.91 L797.92,489.55 L798.88,489.55 L798.91,489.91 L799.38,490.11 L799.38,490.11 L799.78,490.42 L800.11,490.26 L800.59,491.09 L800.29,491.29 L800.36,491.80 L800.36,491.80 L800.29,492.31 L800.59,492.51 L800.11,493.34 L799.78,493.18 L799.38,493.49 L799.38,493.49 L798.91,493.69 L798.88,494.05 L797.92,494.05 L797.89,493.69 L797.42,493.49 L797.42,493.49 L797.02,493.18 L796.69,493.34 L796.21,492.51 L796.51,492.31 L796.44,491.80 L796.44,491.80 L796.51,491.29 L796.21,491.09 L796.69,490.26 L797.02,490.42 L797.42,490.11 Z M799.25,491.80 A0.85,0.85 0 1 0 797.55,491.80 A0.85,0.85 0 1 0 799.25,491.80 Z" fill="#404040"/><path fill-rule="evenodd" d="M802.40,510.25 L803.06,510.05 L803.12,509.55 L804.38,509.55 L804.44,510.05 L805.10,510.25 L805.10,510.25 L805.71,510.57 L806.10,510.26 L806.99,511.15 L806.68,511.54 L807.00,512.15 L807.00,512.15 L807.20,512.81 L807.70,512.87 L807.70,514.13 L807.20,514.19 L807.00,514.85 L807.00,514.85 L806.68,515.46 L806.99,515.85 L806.10,516.74 L805.71,516.43 L805.10,516.75 L805.10,516.75 L804.44,516.95 L804.38,517.45 L803.12,517.45 L803.06,516.95 L802.40,516.75 L802.40,516.75 L801.79,516.43 L801.40,516.74 L800.51,515.85 L800.82,515.46 L800.50,514.85 L800.50,514.85 L800.30,514.19 L799.80,514.13 L799.80,512.87 L800.30,512.81 L800.50,512.15 L800.50,512.15 L800.82,511.54 L800.51,511.15 L801.40,510.26 L801.79,510.57 L802.40,510.25 Z M805.50,513.50 A1.75,1.75 0 1 0 802.00,513.50 A1.75,1.75 0 1 0 805.50,513.50 Z" fill="#383838"/><path fill-rule="evenodd" d="M797.42,517.11 L797.89,516.91 L797.92,516.55 L798.88,516.55 L798.91,516.91 L799.38,517.11 L799.38,517.11 L799.78,517.42 L800.11,517.26 L800.59,518.09 L800.29,518.29 L800.36,518.80 L800.36,518.80 L800.29,519.31 L800.59,519.51 L800.11,520.34 L799.78,520.18 L799.38,520.49 L799.38,520.49 L798.91,520.69 L798.88,521.05 L797.92,521.05 L797.89,520.69 L797.42,520.49 L797.42,520.49 L797.02,520.18 L796.69,520.34 L796.21,519.51 L796.51,519.31 L796.44,518.80 L796.44,518.80 L796.51,518.29 L796.21,518.09 L796.69,517.26 L797.02,517.42 L797.42,517.11 Z M799.25,518.80 A0.85,0.85 0 1 0 797.55,518.80 A0.85,0.85 0 1 0 799.25,518.80 Z" fill="#404040"/><path fill-rule="evenodd" d="M802.40,537.25 L803.06,537.05 L803.12,536.55 L804.38,536.55 L804.44,537.05 L805.10,537.25 L805.10,537.25 L805.71,537.57 L806.10,537.26 L806.99,538.15 L806.68,538.54 L807.00,539.15 L807.00,539.15 L807.20,539.81 L807.70,539.87 L807.70,541.13 L807.20,541.19 L807.00,541.85 L807.00,541.85 L806.68,542.46 L806.99,542.85 L806.10,543.74 L805.71,543.43 L805.10,543.75 L805.10,543.75 L804.44,543.95 L804.38,544.45 L803.12,544.45 L803.06,543.95 L802.40,543.75 L802.40,543.75 L801.79,543.43 L801.40,543.74 L800.51,542.85 L800.82,542.46 L800.50,541.85 L800.50,541.85 L800.30,541.19 L799.80,541.13 L799.80,539.87 L800.30,539.81 L800.50,539.15 L800.50,539.15 L800.82,538.54 L800.51,538.15 L801.40,537.26 L801.79,537.57 L802.40,537.25 Z M805.50,540.50 A1.75,1.75 0 1 0 802.00,540.50 A1.75,1.75 0 1 0 805.50,540.50 Z" fill="#383838"/><path fill-rule="evenodd" d="M797.42,544.11 L797.89,543.91 L797.92,543.55 L798.88,543.55 L798.91,543.91 L799.38,544.11 L799.38,544.11 L799.78,544.42 L800.11,544.26 L800.59,545.09 L800.29,545.29 L800.36,545.80 L800.36,545.80 L800.29,546.31 L800.59,546.51 L800.11,547.34 L799.78,547.18 L799.38,547.49 L799.38,547.49 L798.91,547.69 L798.88,548.05 L797.92,548.05 L797.89,547.69 L797.42,547.49 L797.42,547.49 L797.02,547.18 L796.69,547.34 L796.21,546.51 L796.51,546.31 L796.44,545.80 L796.44,545.80 L796.51,545.29 L796.21,545.09 L796.69,544.26 L797.02,544.42 L797.42,544.11 Z M799.25,545.80 A0.85,0.85 0 1 0 797.55,545.80 A0.85,0.85 0 1 0 799.25,545.80 Z" fill="#404040"/><path fill-rule="evenodd" d="M802.40,564.25 L803.06,564.05 L803.12,563.55 L804.38,563.55 L804.44,564.05 L805.10,564.25 L805.10,564.25 L805.71,564.57 L806.10,564.26 L806.99,565.15 L806.68,565.54 L807.00,566.15 L807.00,566.15 L807.20,566.81 L807.70,566.87 L807.70,568.13 L807.20,568.19 L807.00,568.85 L807.00,568.85 L806.68,569.46 L806.99,569.85 L806.10,570.74 L805.71,570.43 L805.10,570.75 L805.10,570.75 L804.44,570.95 L804.38,571.45 L803.12,571.45 L803.06,570.95 L802.40,570.75 L802.40,570.75 L801.79,570.43 L801.40,570.74 L800.51,569.85 L800.82,569.46 L800.50,568.85 L800.50,568.85 L800.30,568.19 L799.80,568.13 L799.80,566.87 L800.30,566.81 L800.50,566.15 L800.50,566.15 L800.82,565.54 L800.51,565.15 L801.40,564.26 L801.79,564.57 L802.40,564.25 Z M805.50,567.50 A1.75,1.75 0 1 0 802.00,567.50 A1.75,1.75 0 1 0 805.50,567.50 Z" fill="#383838"/><path fill-rule="evenodd" d="M797.42,571.11 L797.89,570.91 L797.92,570.55 L798.88,570.55 L798.91,570.91 L799.38,571.11 L799.38,571.11 L799.78,571.42 L800.11,571.26 L800.59,572.09 L800.29,572.29 L800.36,572.80 L800.36,572.80 L800.29,573.31 L800.59,573.51 L800.11,574.34 L799.78,574.18 L799.38,574.49 L799.38,574.49 L798.91,574.69 L798.88,575.05 L797.92,575.05 L797.89,574.69 L797.42,574.49 L797.42,574.49 L797.02,574.18 L796.69,574.34 L796.21,573.51 L796.51,573.31 L796.44,572.80 L796.44,572.80 L796.51,572.29 L796.21,572.09 L796.69,571.26 L797.02,571.42 L797.42,571.11 Z M799.25,572.80 A0.85,0.85 0 1 0 797.55,572.80 A0.85,0.85 0 1 0 799.25,572.80 Z" fill="#404040"/><path fill-rule="evenodd" d="M802.40,591.25 L803.06,591.05 L803.12,590.55 L804.38,590.55 L804.44,591.05 L805.10,591.25 L805.10,591.25 L805.71,591.57 L806.10,591.26 L806.99,592.15 L806.68,592.54 L807.00,593.15 L807.00,593.15 L807.20,593.81 L807.70,593.87 L807.70,595.13 L807.20,595.19 L807.00,595.85 L807.00,595.85 L806.68,596.46 L806.99,596.85 L806.10,597.74 L805.71,597.43 L805.10,597.75 L805.10,597.75 L804.44,597.95 L804.38,598.45 L803.12,598.45 L803.06,597.95 L802.40,597.75 L802.40,597.75 L801.79,597.43 L801.40,597.74 L800.51,596.85 L800.82,596.46 L800.50,595.85 L800.50,595.85 L800.30,595.19 L799.80,595.13 L799.80,593.87 L800.30,593.81 L800.50,593.15 L800.50,593.15 L800.82,592.54 L800.51,592.15 L801.40,591.26 L801.79,591.57 L802.40,591.25 Z M805.50,594.50 A1.75,1.75 0 1 0 802.00,594.50 A1.75,1.75 0 1 0 805.50,594.50 Z" fill="#383838"/><path fill-rule="evenodd" d="M797.42,598.11 L797.89,597.91 L797.92,597.55 L798.88,597.55 L798.91,597.91 L799.38,598.11 L799.38,598.11 L799.78,598.42 L800.11,598.26 L800.59,599.09 L800.29,599.29 L800.36,599.80 L800.36,599.80 L800.29,600.31 L800.59,600.51 L800.11,601.34 L799.78,601.18 L799.38,601.49 L799.38,601.49 L798.91,601.69 L798.88,602.05 L797.92,602.05 L797.89,601.69 L797.42,601.49 L797.42,601.49 L797.02,601.18 L796.69,601.34 L796.21,600.51 L796.51,600.31 L796.44,599.80 L796.44,599.80 L796.51,599.29 L796.21,599.09 L796.69,598.26 L797.02,598.42 L797.42,598.11 Z M799.25,599.80 A0.85,0.85 0 1 0 797.55,599.80 A0.85,0.85 0 1 0 799.25,599.80 Z" fill="#404040"/><path fill-rule="evenodd" d="M802.40,618.25 L803.06,618.05 L803.12,617.55 L804.38,617.55 L804.44,618.05 L805.10,618.25 L805.10,618.25 L805.71,618.57 L806.10,618.26 L806.99,619.15 L806.68,619.54 L807.00,620.15 L807.00,620.15 L807.20,620.81 L807.70,620.87 L807.70,622.13 L807.20,622.19 L807.00,622.85 L807.00,622.85 L806.68,623.46 L806.99,623.85 L806.10,624.74 L805.71,624.43 L805.10,624.75 L805.10,624.75 L804.44,624.95 L804.38,625.45 L803.12,625.45 L803.06,624.95 L802.40,624.75 L802.40,624.75 L801.79,624.43 L801.40,624.74 L800.51,623.85 L800.82,623.46 L800.50,622.85 L800.50,622.85 L800.30,622.19 L799.80,622.13 L799.80,620.87 L800.30,620.81 L800.50,620.15 L800.50,620.15 L800.82,619.54 L800.51,619.15 L801.40,618.26 L801.79,618.57 L802.40,618.25 Z M805.50,621.50 A1.75,1.75 0 1 0 802.00,621.50 A1.75,1.75 0 1 0 805.50,621.50 Z" fill="#383838"/><path fill-rule="evenodd" d="M797.42,625.11 L797.89,624.91 L797.92,624.55 L798.88,624.55 L798.91,624.91 L799.38,625.11 L799.38,625.11 L799.78,625.42 L800.11,625.26 L800.59,626.09 L800.29,626.29 L800.36,626.80 L800.36,626.80 L800.29,627.31 L800.59,627.51 L800.11,628.34 L799.78,628.18 L799.38,628.49 L799.38,628.49 L798.91,628.69 L798.88,629.05 L797.92,629.05 L797.89,628.69 L797.42,628.49 L797.42,628.49 L797.02,628.18 L796.69,628.34 L796.21,627.51 L796.51,627.31 L796.44,626.80 L796.44,626.80 L796.51,626.29 L796.21,626.09 L796.69,625.26 L797.02,625.42 L797.42,625.11 Z M799.25,626.80 A0.85,0.85 0 1 0 797.55,626.80 A0.85,0.85 0 1 0 799.25,626.80 Z" fill="#404040"/><path fill-rule="evenodd" d="M802.40,645.25 L803.06,645.05 L803.12,644.55 L804.38,644.55 L804.44,645.05 L805.10,645.25 L805.10,645.25 L805.71,645.57 L806.10,645.26 L806.99,646.15 L806.68,646.54 L807.00,647.15 L807.00,647.15 L807.20,647.81 L807.70,647.87 L807.70,649.13 L807.20,649.19 L807.00,649.85 L807.00,649.85 L806.68,650.46 L806.99,650.85 L806.10,651.74 L805.71,651.43 L805.10,651.75 L805.10,651.75 L804.44,651.95 L804.38,652.45 L803.12,652.45 L803.06,651.95 L802.40,651.75 L802.40,651.75 L801.79,651.43 L801.40,651.74 L800.51,650.85 L800.82,650.46 L800.50,649.85 L800.50,649.85 L800.30,649.19 L799.80,649.13 L799.80,647.87 L800.30,647.81 L800.50,647.15 L800.50,647.15 L800.82,646.54 L800.51,646.15 L801.40,645.26 L801.79,645.57 L802.40,645.25 Z M805.50,648.50 A1.75,1.75 0 1 0 802.00,648.50 A1.75,1.75 0 1 0 805.50,648.50 Z" fill="#383838"/><path fill-rule="evenodd" d="M797.42,652.11 L797.89,651.91 L797.92,651.55 L798.88,651.55 L798.91,651.91 L799.38,652.11 L799.38,652.11 L799.78,652.42 L800.11,652.26 L800.59,653.09 L800.29,653.29 L800.36,653.80 L800.36,653.80 L800.29,654.31 L800.59,654.51 L800.11,655.34 L799.78,655.18 L799.38,655.49 L799.38,655.49 L798.91,655.69 L798.88,656.05 L797.92,656.05 L797.89,655.69 L797.42,655.49 L797.42,655.49 L797.02,655.18 L796.69,655.34 L796.21,654.51 L796.51,654.31 L796.44,653.80 L796.44,653.80 L796.51,653.29 L796.21,653.09 L796.69,652.26 L797.02,652.42 L797.42,652.11 Z M799.25,653.80 A0.85,0.85 0 1 0 797.55,653.80 A0.85,0.85 0 1 0 799.25,653.80 Z" fill="#404040"/><path fill-rule="evenodd" d="M802.40,672.25 L803.06,672.05 L803.12,671.55 L804.38,671.55 L804.44,672.05 L805.10,672.25 L805.10,672.25 L805.71,672.57 L806.10,672.26 L806.99,673.15 L806.68,673.54 L807.00,674.15 L807.00,674.15 L807.20,674.81 L807.70,674.87 L807.70,676.13 L807.20,676.19 L807.00,676.85 L807.00,676.85 L806.68,677.46 L806.99,677.85 L806.10,678.74 L805.71,678.43 L805.10,678.75 L805.10,678.75 L804.44,678.95 L804.38,679.45 L803.12,679.45 L803.06,678.95 L802.40,678.75 L802.40,678.75 L801.79,678.43 L801.40,678.74 L800.51,677.85 L800.82,677.46 L800.50,676.85 L800.50,676.85 L800.30,676.19 L799.80,676.13 L799.80,674.87 L800.30,674.81 L800.50,674.15 L800.50,674.15 L800.82,673.54 L800.51,673.15 L801.40,672.26 L801.79,672.57 L802.40,672.25 Z M805.50,675.50 A1.75,1.75 0 1 0 802.00,675.50 A1.75,1.75 0 1 0 805.50,675.50 Z" fill="#383838"/><path fill-rule="evenodd" d="M797.42,679.11 L797.89,678.91 L797.92,678.55 L798.88,678.55 L798.91,678.91 L799.38,679.11 L799.38,679.11 L799.78,679.42 L800.11,679.26 L800.59,680.09 L800.29,680.29 L800.36,680.80 L800.36,680.80 L800.29,681.31 L800.59,681.51 L800.11,682.34 L799.78,682.18 L799.38,682.49 L799.38,682.49 L798.91,682.69 L798.88,683.05 L797.92,683.05 L797.89,682.69 L797.42,682.49 L797.42,682.49 L797.02,682.18 L796.69,682.34 L796.21,681.51 L796.51,681.31 L796.44,680.80 L796.44,680.80 L796.51,680.29 L796.21,680.09 L796.69,679.26 L797.02,679.42 L797.42,679.11 Z M799.25,680.80 A0.85,0.85 0 1 0 797.55,680.80 A0.85,0.85 0 1 0 799.25,680.80 Z" fill="#404040"/><path fill-rule="evenodd" d="M802.40,699.25 L803.06,699.05 L803.12,698.55 L804.38,698.55 L804.44,699.05 L805.10,699.25 L805.10,699.25 L805.71,699.57 L806.10,699.26 L806.99,700.15 L806.68,700.54 L807.00,701.15 L807.00,701.15 L807.20,701.81 L807.70,701.87 L807.70,703.13 L807.20,703.19 L807.00,703.85 L807.00,703.85 L806.68,704.46 L806.99,704.85 L806.10,705.74 L805.71,705.43 L805.10,705.75 L805.10,705.75 L804.44,705.95 L804.38,706.45 L803.12,706.45 L803.06,705.95 L802.40,705.75 L802.40,705.75 L801.79,705.43 L801.40,705.74 L800.51,704.85 L800.82,704.46 L800.50,703.85 L800.50,703.85 L800.30,703.19 L799.80,703.13 L799.80,701.87 L800.30,701.81 L800.50,701.15 L800.50,701.15 L800.82,700.54 L800.51,700.15 L801.40,699.26 L801.79,699.57 L802.40,699.25 Z M805.50,702.50 A1.75,1.75 0 1 0 802.00,702.50 A1.75,1.75 0 1 0 805.50,702.50 Z" fill="#383838"/><path fill-rule="evenodd" d="M797.42,706.11 L797.89,705.91 L797.92,705.55 L798.88,705.55 L798.91,705.91 L799.38,706.11 L799.38,706.11 L799.78,706.42 L800.11,706.26 L800.59,707.09 L800.29,707.29 L800.36,707.80 L800.36,707.80 L800.29,708.31 L800.59,708.51 L800.11,709.34 L799.78,709.18 L799.38,709.49 L799.38,709.49 L798.91,709.69 L798.88,710.05 L797.92,710.05 L797.89,709.69 L797.42,709.49 L797.42,709.49 L797.02,709.18 L796.69,709.34 L796.21,708.51 L796.51,708.31 L796.44,707.80 L796.44,707.80 L796.51,707.29 L796.21,707.09 L796.69,706.26 L797.02,706.42 L797.42,706.11 Z M799.25,707.80 A0.85,0.85 0 1 0 797.55,707.80 A0.85,0.85 0 1 0 799.25,707.80 Z" fill="#404040"/></svg>
</body></html>
